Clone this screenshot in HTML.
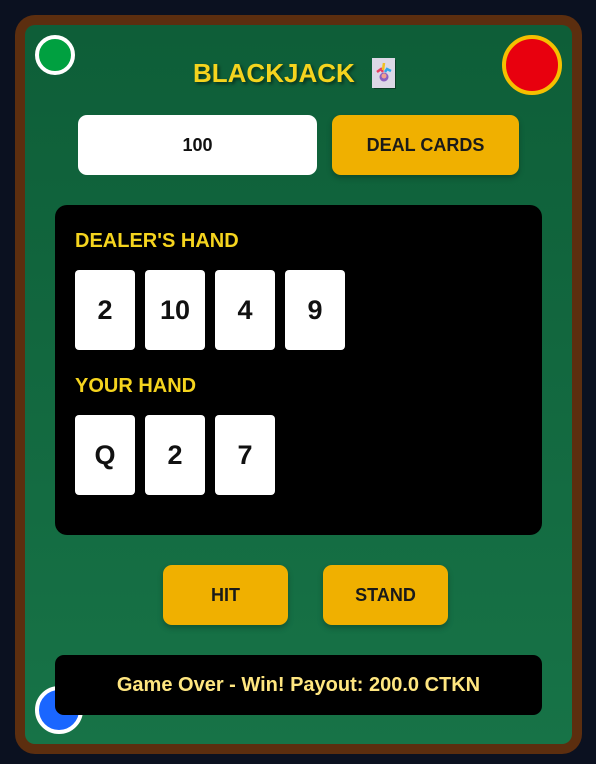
<!DOCTYPE html>
<html><head><meta charset="utf-8"><style>
*{box-sizing:border-box;margin:0;padding:0}
body{width:596px;height:764px;background:#0b1120;font-family:"Liberation Sans","DejaVu Sans",sans-serif;font-weight:bold;position:relative;overflow:hidden}
.frame{position:absolute;left:15px;top:15px;width:567px;height:739px;background:#5c2e0f;border-radius:20px}
.felt{position:absolute;left:25px;top:25px;width:547px;height:719px;border-radius:10px;background:linear-gradient(#0e5e38,#177347)}
.abs{position:absolute}
.circ{position:absolute;border-radius:50%}
.title{left:193px;top:58px;color:#f5d41e;font-size:26px;text-shadow:2px 2px 3px rgba(0,0,0,.5)}
.input{left:78px;top:115px;width:239px;height:60px;background:#fff;border-radius:9px;text-align:center;line-height:60px;font-size:18px;color:#111}
.btn{position:absolute;background:#f0b000;border-radius:9px;text-align:center;color:#1a1a1a;font-size:18px;box-shadow:0 3px 6px rgba(0,0,0,.25)}
.panel{left:55px;top:205px;width:487px;height:330px;background:#000;border-radius:12px}
.lbl{position:absolute;left:75px;color:#f5d41e;font-size:20px}
.card{position:absolute;width:60px;height:80px;background:#fff;border-radius:4px;text-align:center;line-height:80px;font-size:27px;color:#111}
.msg{left:55px;top:655px;width:487px;height:60px;background:#000;border-radius:9px;text-align:center;line-height:60px;color:#ffe680;font-size:20px}
</style></head><body>
<div class="frame"></div>
<div class="felt"></div>
<div class="circ" style="left:35px;top:35px;width:40px;height:40px;background:#00a040;border:4px solid #fff"></div>
<div class="circ" style="left:502px;top:35px;width:60px;height:60px;background:#e8000e;border:4px solid #f5c000"></div>
<div class="circ" style="left:35px;top:686px;width:48px;height:48px;background:#1a66ff;border:4px solid #fff"></div>
<div class="abs title">BLACKJACK</div>
<svg class="abs" style="left:372px;top:58px" width="26" height="33" viewBox="0 0 26 33">
<rect x="2" y="2" width="22" height="29" fill="#000" opacity=".35"/>
<rect x="0" y="0" width="23" height="30" fill="#dcd8e6"/>
<path d="M5 14 L9 11 L11 14" stroke="#e84060" stroke-width="2.5" fill="none"/>
<path d="M11 12 L12 5" stroke="#f0c020" stroke-width="2.5"/>
<path d="M13 14 L15 11 L19 13" stroke="#30a8e8" stroke-width="2.5" fill="none"/>
<circle cx="12" cy="19" r="4.5" fill="#8a60c0"/>
<circle cx="12" cy="18" r="2.5" fill="#f0a090"/>
</svg>
<div class="abs input">100</div>
<div class="btn" style="left:332px;top:115px;width:187px;height:60px;line-height:60px">DEAL CARDS</div>
<div class="abs panel"></div>
<div class="lbl" style="top:230px">DEALER'S HAND</div>
<div class="card" style="left:75px;top:270px">2</div>
<div class="card" style="left:145px;top:270px">10</div>
<div class="card" style="left:215px;top:270px">4</div>
<div class="card" style="left:285px;top:270px">9</div>
<div class="lbl" style="top:375px">YOUR HAND</div>
<div class="card" style="left:75px;top:415px">Q</div>
<div class="card" style="left:145px;top:415px">2</div>
<div class="card" style="left:215px;top:415px">7</div>
<div class="btn" style="left:163px;top:565px;width:125px;height:60px;line-height:60px">HIT</div>
<div class="btn" style="left:323px;top:565px;width:125px;height:60px;line-height:60px">STAND</div>
<div class="abs msg">Game Over - Win! Payout: 200.0 CTKN</div>
</body></html>
